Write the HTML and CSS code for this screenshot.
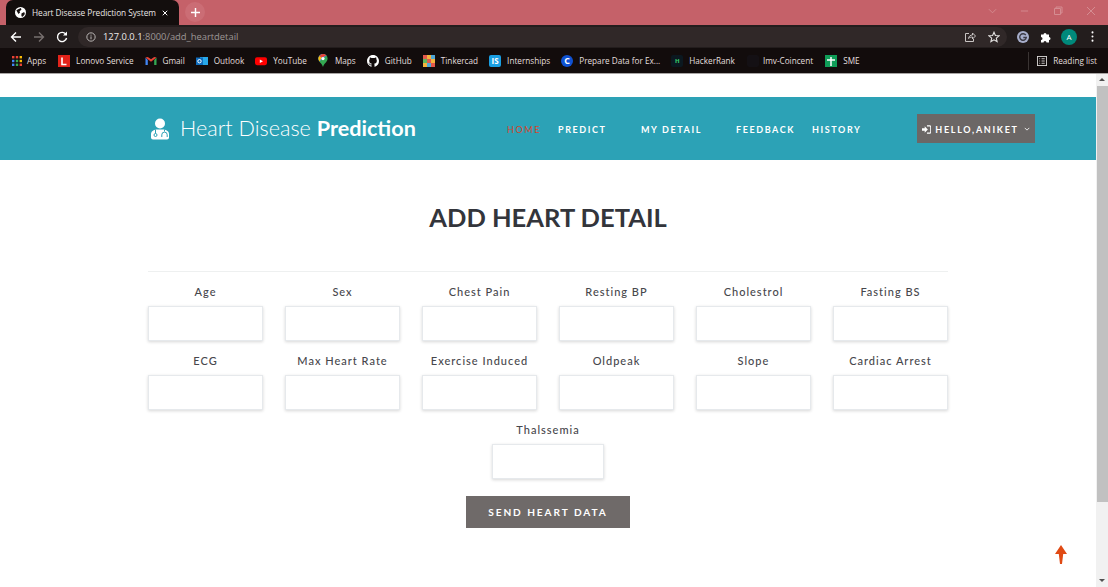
FILE: index.html
```html
<!DOCTYPE html>
<html lang="en">
<head>
<meta charset="utf-8">
<title>Heart Disease Prediction System</title>
<link rel="stylesheet" href="styles.css">
</head>
<body>
<div class="chrome">
  <div class="tabstrip">
    <div class="tab">
      <svg class="globe" viewBox="0 0 12 12"><circle cx="6" cy="6" r="6" fill="#fff"/><path d="M1.5 3.5 4 2.2 6.5 1 7 3 5 4.5 5.5 6 3.8 7.5 2.5 5.5ZM7 7l3-1.500.8 2L8.500 10.500 7 10Z" fill="#16100f"/></svg>
      <span class="tab-title">Heart Disease Prediction System</span>
      <svg class="tab-x" viewBox="0 0 8 8"><path d="M1 1l6 6M7 1 1 7" stroke="#fff" stroke-width="1.300"/></svg>
    </div>
    <div class="newtab"><svg viewBox="0 0 10 10"><path d="M5 0v10M0 5h10" stroke="#fff" stroke-width="1.600"/></svg></div>
    <div class="winctl">
      <svg class="w-chev" viewBox="0 0 10 6"><path d="M1 1l4 4 4-4" fill="none" stroke="#d58d92" stroke-width="1"/></svg>
      <svg class="w-min" viewBox="0 0 10 2"><path d="M1 1h8" stroke="#d58d92"/></svg>
      <svg class="w-max" viewBox="0 0 10 10"><path d="M1.500 2.500h6v6h-6zM3 2.500V1h6v6H7.500" fill="none" stroke="#d58d92"/></svg>
      <svg class="w-close" viewBox="0 0 10 10"><path d="M1 1l8 8M9 1 1 9" stroke="#d58d92"/></svg>
    </div>
  </div>
  <div class="toolbar">
    <svg class="nav-ic" viewBox="0 0 12 12"><path d="M11 6H2M6 1.500 1.500 6 6 10.500" fill="none" stroke="#fff" stroke-width="1.400"/></svg>
    <svg class="nav-ic dim" viewBox="0 0 12 12"><path d="M1 6h9M6 1.500 10.500 6 6 10.500" fill="none" stroke="#77706f" stroke-width="1.400"/></svg>
    <svg class="nav-ic" viewBox="0 0 12 12"><path d="M10 3.500A4.600 4.600 0 1 0 10.600 7" fill="none" stroke="#fff" stroke-width="1.400"/><path d="M7 4.500h4v-4z" fill="#fff"/></svg>
    <div class="omnibox">
      <svg class="info" viewBox="0 0 12 12"><circle cx="6" cy="6" r="5" fill="none" stroke="#b9b5b4" stroke-width="1.200"/><path d="M6 5.300v3.400M6 3.200v1.200" stroke="#b9b5b4" stroke-width="1.200"/></svg>
      <span class="url"><span class="host">127.0.0.1</span>:8000/add_heartdetail</span>
      <svg class="share" viewBox="0 0 12 12"><path d="M5 2.500H1.500v8h8V8M4.500 7.500C5 5 6.500 4 8.500 4V2l3 3-3 3V6C6.500 6 5.500 6.500 4.500 7.500Z" fill="none" stroke="#c8c4c3"/></svg>
      <svg class="star" viewBox="0 0 12 12"><path d="M6 1.200 7.400 4.500l3.600.3-2.700 2.300.8 3.500L6 8.800l-3.100 1.800.8-3.500L1 4.800l3.600-.3Z" fill="none" stroke="#e4e2e1" stroke-width="1.100"/></svg>
    </div>
    <div class="profile-tools">
      <svg class="ext-g" viewBox="0 0 12 12"><circle cx="6" cy="6" r="6" fill="#a7aecb"/><path d="M8.800 4.200A3.300 3.300 0 1 0 9.300 6.500H6.300" fill="none" stroke="#3b3a44" stroke-width="1.400"/></svg>
      <svg class="ext-p" viewBox="0 0 12 12"><path d="M1 3.500h2.500a1.500 1.500 0 1 1 3 0H9V6a1.500 1.500 0 1 1 0 3v2.500H6.500a1.500 1.500 0 1 0-3 0H1V9a1.500 1.500 0 1 0 0-3Z" fill="#fff"/></svg>
      <span class="avatar">A</span>
      <svg class="kebab" viewBox="0 0 3 12"><circle cx="1.500" cy="1.500" r="1.100" fill="#fff"/><circle cx="1.500" cy="6" r="1.100" fill="#fff"/><circle cx="1.500" cy="10.500" r="1.100" fill="#fff"/></svg>
    </div>
  </div>
  <div class="bookmarks">
    <a class="bm bm-apps"><svg class="bi" viewBox="0 0 12 12"><rect x="1" y="1" width="2.400" height="2.400" fill="#ea4335"/><rect x="4.800" y="1" width="2.400" height="2.400" fill="#ea4335"/><rect x="8.600" y="1" width="2.400" height="2.400" fill="#fbbc05"/><rect x="1" y="4.800" width="2.400" height="2.400" fill="#4285f4"/><rect x="4.800" y="4.800" width="2.400" height="2.400" fill="#34a853"/><rect x="8.600" y="4.800" width="2.400" height="2.400" fill="#fbbc05"/><rect x="1" y="8.600" width="2.400" height="2.400" fill="#4285f4"/><rect x="4.800" y="8.600" width="2.400" height="2.400" fill="#34a853"/><rect x="8.600" y="8.600" width="2.400" height="2.400" fill="#ea4335"/></svg>Apps</a>
    <a class="bm"><svg class="bi" viewBox="0 0 12 12"><rect width="12" height="12" fill="#e2231a"/><path d="M4 2.500v7h4.500" fill="none" stroke="#fff" stroke-width="1.600"/></svg>Lonovo Service</a>
    <a class="bm"><svg class="bi" viewBox="0 0 12 12"><path d="M.5 2.500v7.500h2.300V5Z" fill="#4285f4"/><path d="M11.500 2.500V10H9.200V5Z" fill="#34a853"/><path d="M.5 2.500 6 6.700 11.500 2.500 9.200 2 6 4.300 2.800 2Z" fill="#ea4335"/></svg>Gmail</a>
    <a class="bm"><svg class="bi" viewBox="0 0 12 12"><rect x="4" y="2" width="8" height="8" fill="#28a8ea"/><rect y="2.500" width="7" height="7.500" fill="#0f6cbd"/><circle cx="3.500" cy="6.200" r="1.700" fill="none" stroke="#fff"/></svg>Outlook</a>
    <a class="bm"><svg class="bi" viewBox="0 0 13 12"><rect y="2" width="13" height="8.500" rx="2.200" fill="#f00"/><path d="M5.200 4.300v4L8.700 6.300Z" fill="#fff"/></svg>YouTube</a>
    <a class="bm bm-maps"><svg class="bi bi-pin" viewBox="0 0 10 13"><path d="M5 0a4.600 4.600 0 0 1 4.600 4.600C9.600 8 6 9.500 5 13 4 9.500.4 8 .4 4.600A4.600 4.600 0 0 1 5 0Z" fill="#34a853"/><path d="M5 0a4.600 4.600 0 0 1 3.500 1.600L1.500 7.500C.8 6.600.4 5.700.4 4.600A4.600 4.600 0 0 1 5 0Z" fill="#4285f4"/><path d="M1.300 2 3.800 3.500 1.500 7.500C.8 6.600.4 5.700.4 4.600.4 3.600.7 2.700 1.300 2Z" fill="#fbbc05"/><path d="M5 0C3.500 0 2.200.7 1.300 2l2.500 1.500L8.500 1.600C7.700.6 6.400 0 5 0Z" fill="#ea4335"/><circle cx="5" cy="4.600" r="1.600" fill="#fff"/></svg>Maps</a>
    <a class="bm"><svg class="bi" viewBox="0 0 16 16"><path fill="#fff" d="M8 0C3.580 0 0 3.580 0 8c0 3.540 2.290 6.530 5.470 7.590.4.070.55-.17.55-.38 0-.19-.01-.82-.01-1.490-2.010.37-2.530-.49-2.690-.94-.09-.23-.48-.94-.82-1.130-.28-.15-.68-.52-.01-.53.630-.01 1.080.58 1.230.82.720 1.210 1.870.87 2.330.66.070-.52.280-.87.510-1.070-1.780-.2-3.640-.89-3.640-3.950 0-.87.310-1.590.82-2.150-.08-.2-.36-1.020.08-2.120 0 0 .67-.21 2.200.82.640-.18 1.320-.27 2-.27s1.360.09 2 .27c1.530-1.040 2.200-.82 2.200-.82.440 1.100.16 1.920.08 2.120.51.560.82 1.270.82 2.150 0 3.070-1.870 3.750-3.650 3.950.29.250.54.730.54 1.480 0 1.070-.01 1.930-.01 2.200 0 .21.150.46.550.38A8 8 0 0 0 16 8c0-4.420-3.580-8-8-8Z"/></svg>GitHub</a>
    <a class="bm"><svg class="bi" viewBox="0 0 12 12"><rect width="4" height="4" fill="#e2584c"/><rect x="4" width="4" height="4" fill="#f3b33d"/><rect x="8" width="4" height="4" fill="#4fa7d6"/><rect y="4" width="4" height="4" fill="#5db85c"/><rect x="4" y="4" width="4" height="4" fill="#e2584c"/><rect x="8" y="4" width="4" height="4" fill="#f3b33d"/><rect y="8" width="4" height="4" fill="#f3b33d"/><rect x="4" y="8" width="4" height="4" fill="#4fa7d6"/><rect x="8" y="8" width="4" height="4" fill="#e2584c"/></svg>Tinkercad</a>
    <a class="bm"><span class="bi chip chip-is">IS</span>Internships</a>
    <a class="bm"><span class="bi chip chip-c">C</span><span class="bm-long">Prepare Data for Ex...</span></a>
    <a class="bm"><span class="bi chip chip-hr">H</span>HackerRank</a>
    <a class="bm bm-imv"><span class="bi chip chip-imv"></span>Imv-Coincent</a>
    <a class="bm"><svg class="bi" viewBox="0 0 12 12"><rect width="12" height="12" fill="#0f9d58"/><path d="M6 2v9M2 5h8" stroke="#fff" stroke-width="1.500"/></svg>SME</a>
    <div class="reading">
      <svg class="bi rl" viewBox="0 0 11 11"><rect x=".5" y=".5" width="10" height="10" fill="none" stroke="#d8d5d4"/><path d="M2.500 3h1M2.500 5.500h1M2.500 8h1M5 3h3.500M5 5.500h3.500M5 8h3.500" stroke="#d8d5d4"/></svg>Reading list
    </div>
  </div>
</div>

<div class="viewport">
  <div class="page">
    <header class="site-head">
      <a class="brand">
        <svg class="brand-ic" viewBox="0 0 20 22"><circle cx="10" cy="5.500" r="5" fill="#fff"/><path d="M1 19.500v-3.300C1 13.500 3.500 11.800 6 11.500h8c2.500.3 5 2 5 4.700v3.300a2 2 0 0 1-2 2H3a2 2 0 0 1-2-2Z" fill="#fff"/><circle cx="5.500" cy="17" r="1.500" fill="none" stroke="#2ca2b6"/><path d="M5.500 15.500v-4M14.500 11.500v2M11.800 19v-2.200a2.700 2.700 0 0 1 5.400 0V19" fill="none" stroke="#2ca2b6"/></svg>
        <span class="brand-text">Heart Disease <b>Prediction</b></span>
      </a>
      <nav class="nav">
        <a class="nav-link nav-home">HOME</a>
        <a class="nav-link nav-predict">PREDICT</a>
        <a class="nav-link nav-detail">MY DETAIL</a>
        <a class="nav-link nav-feedback">FEEDBACK</a>
        <a class="nav-link nav-history">HISTORY</a>
      </nav>
      <a class="user-btn">
        <svg class="login-ic" viewBox="0 0 10 10"><path d="M0 3.700h3V1.500L6.500 5 3 8.500V6.300H0Z" fill="#fff"/><path d="M5.500 1h3.200a1 1 0 0 1 1 1v6a1 1 0 0 1-1 1H5.500" fill="none" stroke="#fff" stroke-width="1.200"/></svg>
        <span>HELLO,ANIKET</span>
        <svg class="chev" viewBox="0 0 8 5"><path d="M1 1l3 3 3-3" fill="none" stroke="#fff" stroke-width="1.100"/></svg>
      </a>
    </header>
    <main class="content">
      <h1 class="title">ADD HEART DETAIL</h1>
      <hr class="rule">
      <form class="detail-form">
        <div class="grid">
          <label class="field">Age<input class="box" type="text"></label>
          <label class="field">Sex<input class="box" type="text"></label>
          <label class="field">Chest Pain<input class="box" type="text"></label>
          <label class="field">Resting BP<input class="box" type="text"></label>
          <label class="field">Cholestrol<input class="box" type="text"></label>
          <label class="field">Fasting BS<input class="box" type="text"></label>
          <label class="field">ECG<input class="box" type="text"></label>
          <label class="field">Max Heart Rate<input class="box" type="text"></label>
          <label class="field">Exercise Induced<input class="box" type="text"></label>
          <label class="field">Oldpeak<input class="box" type="text"></label>
          <label class="field">Slope<input class="box" type="text"></label>
          <label class="field">Cardiac Arrest<input class="box" type="text"></label>
        </div>
        <label class="field field-last">Thalssemia<input class="box" type="text"></label>
        <button class="send" type="button">SEND HEART DATA</button>
      </form>
    </main>
    <a class="to-top"><svg viewBox="0 0 12 19"><path d="M6 0 12 9H8.200L7 19H5L3.800 9H0Z" fill="#e04a14"/></svg></a>
  </div>
  <div class="scrollbar">
    <svg class="sb-arrow" viewBox="0 0 8 4"><path d="M4 0 8 4H0Z" fill="#505050"/></svg>
    <div class="sb-thumb"></div>
    <svg class="sb-arrow" viewBox="0 0 8 4"><path d="M4 4 8 0H0Z" fill="#505050"/></svg>
  </div>
</div>
</body>
</html>
```
FILE: styles.css
```css
* { box-sizing: border-box; }
html, body { margin: 0; height: 100%; overflow: hidden; }
body { width: 1108px; height: 587px; display: flex; flex-direction: column; background: #fff; font-family: "Open Sans", "Liberation Sans", sans-serif; }
svg { display: block; flex: none; }
a { color: inherit; text-decoration: none; }

.chrome { flex: none; height: 74px; display: flex; flex-direction: column; }
.tabstrip { height: 25px; background: #c56169; display: flex; align-items: flex-end; padding-left: 6px; position: relative; }
.tab { width: 173px; height: 25px; background: #130e0d; border-radius: 7px 7px 0 0; display: flex; align-items: center; padding-left: 9px; color: #e9e6e5; font-size: 8.300px; }
.globe { width: 11px; height: 11px; }
.tab-title { margin-left: 6px; width: 130px; white-space: nowrap; font-family: "Open Sans", sans-serif; letter-spacing: -.05px; }
.tab-x { width: 6px; height: 6px; margin-left: 0; }
.newtab { width: 20px; height: 20px; margin: 0 0 3px 6px; display: flex; align-items: center; justify-content: center; border-radius: 50%; background: #cb6d75; }
.newtab svg { width: 9px; height: 9px; }
.winctl { margin-left: auto; display: flex; align-items: center; align-self: flex-start; height: 22px; }
.w-chev { width: 9px; height: 6px; margin-right: 23px; }
.w-min { width: 9px; height: 2px; margin-right: 24px; }
.w-max { width: 10px; height: 10px; margin-right: 23px; }
.w-close { width: 10px; height: 10px; margin-right: 12px; }

.toolbar { height: 23px; background: #231d1d; display: flex; align-items: center; padding-left: 10px; }
.nav-ic { width: 12px; height: 12px; margin-right: 11px; }
.omnibox { width: 929px; height: 20px; margin-left: -1px; background: #302828; border-radius: 10px; display: flex; align-items: center; padding: 0 7px 0 8px; font-size: 9.400px; color: #9d9796; }
.info { width: 10px; height: 10px; }
.url { margin-left: 7px; }
.host { color: #ece9e8; }
.share { width: 12px; height: 12px; margin-left: auto; margin-right: 12px; }
.star { width: 12px; height: 12px; }
.profile-tools { display: flex; align-items: center; margin-left: 10px; }
.ext-g { width: 12px; height: 12px; }
.ext-p { width: 12px; height: 12px; margin-left: 11px; }
.avatar { width: 16px; height: 16px; margin-left: 9px; border-radius: 50%; background: #00897b; color: #fff; font-size: 8px; display: flex; align-items: center; justify-content: center; }
.kebab { width: 3px; height: 11px; margin-left: 14px; }

.bookmarks { height: 26px; background: #120c0c; border-bottom: 1px solid #a8a5a4; display: flex; align-items: center; padding-left: 11px; color: #e2dfde; font-size: 8.200px; white-space: nowrap; }
.bm { display: flex; align-items: center; margin-right: 11px; }
.bi { width: 12px; height: 12px; margin-right: 6px; }
.bm-apps { margin-right: 12px; }
.bm-apps .bi { margin-right: 4px; }
.bi-pin { width: 10px; height: 13px; margin-right: 7px; }
.bm-imv { margin-left: 1px; margin-right: 12px; }
.chip { display: flex; align-items: center; justify-content: center; font-size: 8px; font-weight: 700; color: #fff; border-radius: 2px; }
.chip-is { background: #1a9ee2; }
.chip-c { background: #0f52d3; border-radius: 50%; font-size: 9px; }
.chip-hr { background: #0b1820; color: #39d16d; font-size: 6px; }
.chip-imv { background: #141014; margin-right: 4px; }
.reading { margin-left: auto; height: 18px; border-left: 1px solid #3a3433; padding-left: 8px; margin-right: 11px; display: flex; align-items: center; }
.rl { width: 10px; height: 10px; margin-right: 6px; }

.viewport { flex: 1; display: flex; min-height: 0; }
.page { flex: 1; min-width: 0; position: relative; padding-top: 23px; }
.site-head { height: 63px; background: #2ca2b6; display: flex; align-items: center; padding-left: 150px; color: #fff; }
.brand { display: flex; align-items: center; width: 357px; }
.brand-ic { width: 20px; height: 22px; margin-right: 10px; }
.brand-text { font-family: "Lato", sans-serif; font-size: 21.600px; font-weight: 300; white-space: nowrap; margin-bottom: 2px; }
.brand-text b { font-weight: 700; }
.nav { display: flex; font-family: "Lato", sans-serif; font-size: 9px; font-weight: 700; letter-spacing: 1.600px; margin-top: 2px; width: 410px; }
.nav-link { white-space: nowrap; }
.nav-home { color: #d8452b; width: 51px; font-weight: 400; }
.nav-predict { width: 83px; }
.nav-detail { width: 95px; }
.nav-feedback { width: 76px; }
.user-btn { width: 118px; height: 29px; padding-top: 1px; background: #6b6766; display: flex; align-items: center; justify-content: center; font-family: "Lato", sans-serif; font-size: 9px; font-weight: 700; letter-spacing: 1.700px; }
.login-ic { width: 9px; height: 9px; margin-right: 4px; }
.chev { width: 6px; height: 4px; margin-left: 5px; }

.content { width: 800px; margin-left: 148px; display: flex; flex-direction: column; align-items: stretch; }
.title { margin: 38px 0 0; height: 38px; line-height: 38px; text-align: center; font-family: "Lato", sans-serif; font-size: 25.500px; font-weight: 700; color: #33353b; }
.rule { margin: 35px 0 0; border: 0; border-top: 1px solid #eef0f0; height: 0; }
.detail-form { display: flex; flex-direction: column; align-items: center; padding-top: 13px; }
.grid { width: 100%; display: grid; grid-template-columns: repeat(6, 115px); justify-content: space-between; row-gap: 13px; }
.field { display: flex; flex-direction: column; align-items: stretch; height: 56px; text-align: center; font-family: "Lato", sans-serif; font-size: 11px; font-weight: 500; letter-spacing: 1px; line-height: 14px; color: #47474c; gap: 7px; }
.box { display: block; width: 100%; height: 35px; border: 1px solid #e6e9ec; background: #fff; box-shadow: 0 1px 3px rgba(0,0,0,.16); outline: 0; padding: 0; margin: 0; }
.field-last { width: 112px; margin-top: 13px; white-space: nowrap; }
.send { width: 164px; height: 32px; margin-top: 17px; border: 0; padding: 0; background: #6f6a69; color: #fff; font-family: "Lato", sans-serif; font-size: 10.100px; font-weight: 700; letter-spacing: 1.950px; }
.to-top { position: absolute; left: 1055px; top: 471px; width: 12px; height: 19px; }
.to-top svg { width: 12px; height: 19px; }

.scrollbar { width: 12px; background: #f1f1f1; display: flex; flex-direction: column; align-items: center; }
.sb-arrow { width: 6px; height: 3px; margin: 4px 0 5px; }
.sb-thumb { width: 11px; height: 416px; background: #c1c1c1; margin-bottom: auto; }
```
